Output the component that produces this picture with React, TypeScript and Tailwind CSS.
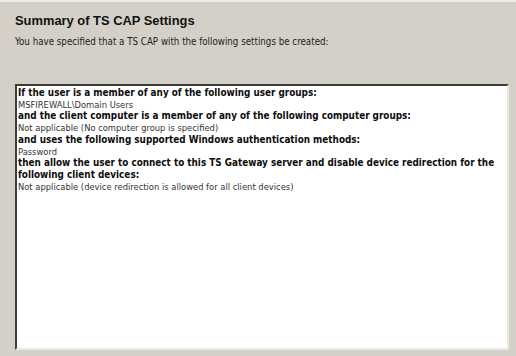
export default function App() {
  const rows: { text: string; bold: boolean }[] = [
    { text: "If the user is a member of any of the following user groups:", bold: true },
    { text: "MSFIREWALL\\Domain Users", bold: false },
    { text: "and the client computer is a member of any of the following computer groups:", bold: true },
    { text: "Not applicable (No computer group is specified)", bold: false },
    { text: "and uses the following supported Windows authentication methods:", bold: true },
    { text: "Password", bold: false },
    {
      text: "then allow the user to connect to this TS Gateway server and disable device redirection for the following client devices:",
      bold: true,
    },
    { text: "Not applicable (device redirection is allowed for all client devices)", bold: false },
  ]

  return (
    <div className="w-[516px] h-[356px] bg-[#d4d0c8] border-t-2 border-[#ecebe6] overflow-hidden">
      <div className="px-[15px] pt-[11px]">
        <h1 className="font-['Liberation_Sans',Arial,sans-serif] font-bold text-[12.9px] leading-[16px] text-[#111]">
          Summary of TS CAP Settings
        </h1>
        <p className="mt-[7px] font-['DejaVu_Sans_Condensed','DejaVu_Sans',sans-serif] text-[9.7px] leading-[12px] text-[#222]">
          You have specified that a TS CAP with the following settings be created:
        </p>
      </div>
      <div className="ml-[15px] mt-[36px] w-[494px] h-[266px] bg-white border-t-2 border-l-2 border-[#3c3c3c] border-r-2 border-b-2 border-r-[#ebe9e3] border-b-[#ebe9e3] px-[1px] pt-[1px]">
        <div className="w-[488px] font-['DejaVu_Sans_Condensed','DejaVu_Sans',sans-serif] text-[#111]">
          {rows.map((r, i) => (
            <div
              key={i}
              className={
                r.bold
                  ? "font-bold text-[9.85px] leading-[11.7px] text-[#0d0d0d]"
                  : "text-[9.3px] leading-[11.7px] text-[#333]"
              }
            >
              {r.text}
            </div>
          ))}
        </div>
      </div>
    </div>
  )
}
